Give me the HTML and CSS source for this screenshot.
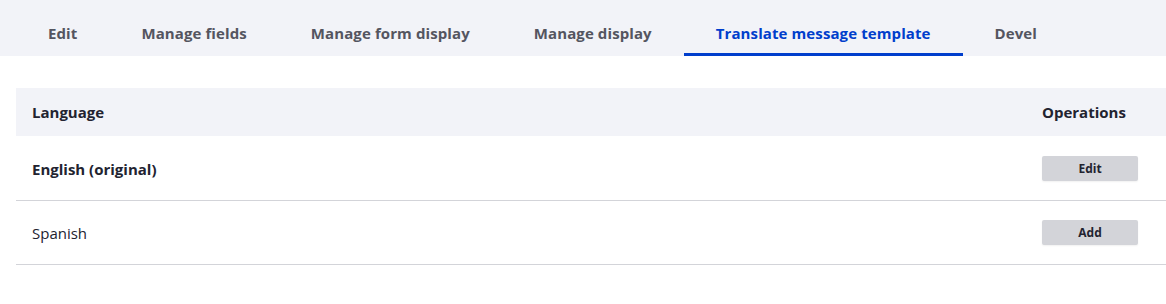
FILE: index.html
```html
<!DOCTYPE html>
<html lang="en">
<head>
    <meta charset="UTF-8">
    <meta name="viewport" content="width=device-width, initial-scale=1.0">
    <title>Translate message template</title>
    <link rel="stylesheet" href="styles.css">
</head>

<body>
    <nav class="tabs">
        <a href="#" class="tab">Edit</a>
        <a href="#" class="tab">Manage fields</a>
        <a href="#" class="tab">Manage form display</a>
        <a href="#" class="tab">Manage display</a>
        <a href="#" class="tab active">Translate message template</a>
        <a href="#" class="tab">Devel</a>
    </nav>

    <div class="content">
        <table class="translations">
            <thead>
                <tr>
                    <th>Language</th>
                    <th class="ops">Operations</th>
                </tr>
            </thead>
            <tbody>
                <tr>
                    <td><strong>English (original)</strong></td>
                    <td class="ops"><a href="#" class="btn">Edit</a></td>
                </tr>
                <tr>
                    <td>Spanish</td>
                    <td class="ops"><a href="#" class="btn">Add</a></td>
                </tr>
            </tbody>
        </table>
    </div>
</body>
</html>
```

FILE: styles.css
```css
body {
    font-family: 'Open Sans', 'Noto Sans', sans-serif;
    margin: 0;
    background: #fff;
    color: #222330;
}

.tabs {
    display: flex;
    background: #f2f3f8;
    height: 56px;
    padding-left: 16px;
}

.tab {
    display: flex;
    align-items: center;
    padding: 12px 32px 0;
    font-size: 15px;
    font-weight: 700;
    letter-spacing: 0.1px;
    color: #545560;
    text-decoration: none;
    border-bottom: 3px solid transparent;
}

.tab.active {
    color: #003ecc;
    border-bottom-color: #003ecc;
}

.content {
    padding: 32px 0 0 16px;
}

.translations {
    width: 100%;
    border-collapse: collapse;
    font-size: 15px;
}

.translations th {
    background: #f2f3f8;
    height: 48px;
    padding: 0 16px;
    text-align: left;
    font-weight: 700;
}

.translations td {
    height: 63px;
    padding: 0 16px;
    border-bottom: 1px solid #d3d4d9;
}

.translations tbody tr:first-child td {
    padding-top: 1px;
}

.translations .ops {
    width: 108px;
}

.btn {
    display: block;
    width: 96px;
    height: 25px;
    line-height: 25px;
    text-align: center;
    background: #d3d4d9;
    border-radius: 2px;
    color: #222330;
    font-size: 12px;
    font-weight: 700;
    text-decoration: none;
    box-shadow: 0 1px 2px rgba(0, 0, 0, 0.06);
}
```
